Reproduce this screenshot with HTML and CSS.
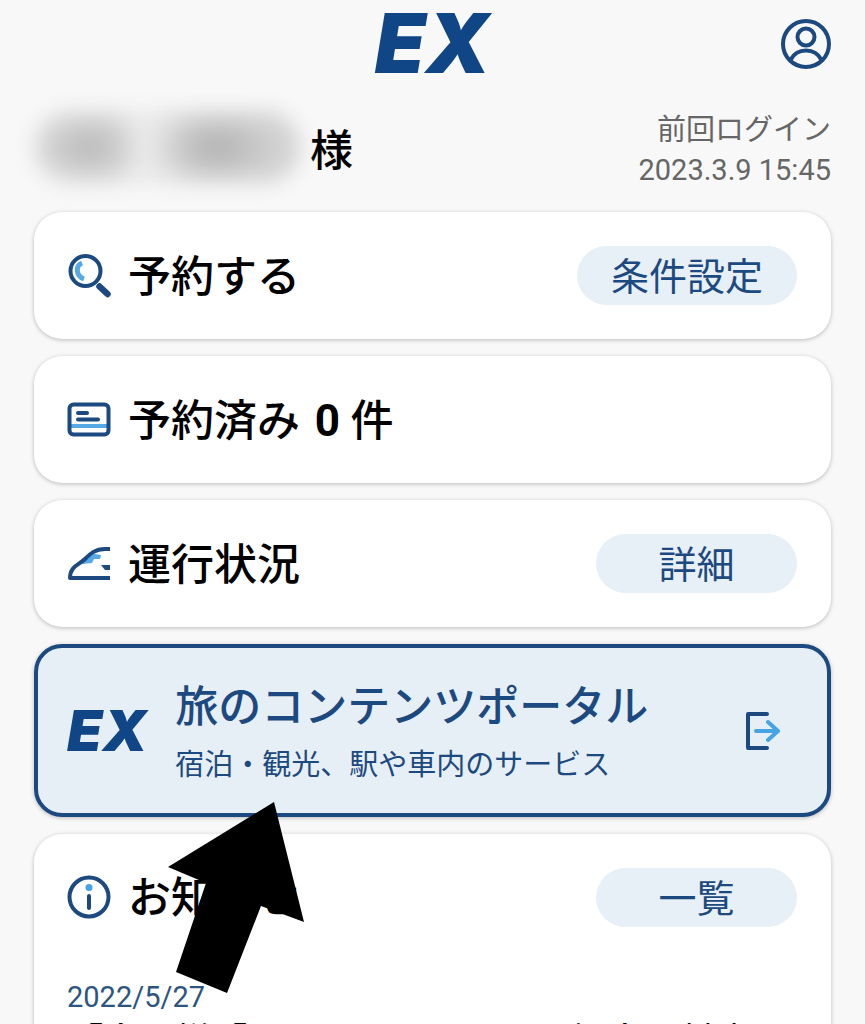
FILE: index.html
```
<!DOCTYPE html>
<html lang="ja">
<head>
  <meta charset="UTF-8">
  <meta name="viewport" content="width=device-width, initial-scale=1.0">
  <title>EX</title>
  <link rel="stylesheet" href="styles.css">
</head>
<body>
  <header class="topbar">
    <h1 class="logo">EX</h1>
    <button class="account" type="button" aria-label="アカウント">
      <svg width="52" height="52" viewBox="0 0 52 52" fill="none" stroke="#1c4a80" stroke-width="4">
        <circle cx="26" cy="26" r="23"/>
        <circle cx="26" cy="19" r="8.5"/>
        <path d="M10.500 42c3-6 9-9.500 15.500-9.500s12.500 3.500 15.500 9.500"/>
      </svg>
    </button>
  </header>

  <main>
    <section class="user">
      <p class="user-name"><span class="masked"></span>様</p>
      <p class="last-login">前回ログイン<br>2023.3.9 15:45</p>
    </section>

    <section class="card">
      <svg class="icon" width="44" height="44" viewBox="0 0 44 44" fill="none" stroke-width="4">
        <path d="M15 9c-7 3-6 13 2 16" stroke="#55aae6" stroke-width="5"/>
        <circle cx="18.500" cy="17" r="15" stroke="#1c4a80"/>
        <path d="M32.500 32.500l8 7.500" stroke="#1c4a80" stroke-width="6.500" stroke-linecap="round"/>
      </svg>
      <h2>予約する</h2>
      <button class="pill" type="button">条件設定</button>
    </section>

    <section class="card">
      <svg class="icon" width="44" height="44" viewBox="0 0 44 44" fill="none" stroke="#1c4a80" stroke-width="4">
        <path d="M3 28h38" stroke="#55aae6"/>
        <rect x="2.500" y="6.500" width="39" height="30" rx="4"/>
        <path d="M11 15h9M11 21.500h20" stroke-linecap="round"/>
      </svg>
      <h2>予約済み <b>0</b> 件</h2>
    </section>

    <section class="card">
      <svg class="icon" width="44" height="44" viewBox="0 0 44 44" fill="none" stroke="#1c4a80" stroke-width="4">
        <path d="M22 11l12 2-1 4-6 0-2 4-10 1z" fill="#55aae6" stroke="none"/>
        <path d="M43 7H38c-10 0-15 5-20 10C12 23 3 24 3 36H43" stroke-linejoin="round"/>
        <path d="M43 23h-9l4 5h5z" fill="#1c4a80" stroke="none"/>
      </svg>
      <h2>運行状況</h2>
      <button class="pill" type="button">詳細</button>
    </section>

    <a class="card portal" href="#">
      <span class="logo logo-small">EX</span>
      <span class="portal-text">
        <strong>旅のコンテンツポータル</strong>
        <small>宿泊・観光、駅や車内のサービス</small>
      </span>
      <svg class="exit" width="36" height="40" viewBox="0 0 36 40" fill="none" stroke-width="4" stroke-linecap="round" stroke-linejoin="round">
        <path d="M22 3H3v34h19" stroke="#1c4a80"/>
        <path d="M11 20h22M23 11l10 9-10 9" stroke="#45a3e6"/>
      </svg>
    </a>

    <section class="card news">
      <div class="news-head">
        <svg class="icon" width="44" height="44" viewBox="0 0 44 44" fill="none" stroke="#1c4a80" stroke-width="4">
          <circle cx="22" cy="22" r="19.500"/>
          <circle cx="22" cy="12.500" r="3.500" fill="#45a3e6" stroke="none"/>
          <path d="M22 21v12" stroke-linecap="round"/>
        </svg>
        <h2>お知らせ</h2>
        <button class="pill" type="button">一覧</button>
      </div>
      <time datetime="2022-05-27">2022/5/27</time>
      <p class="news-title">「会の様「さくら」とこまちの場合の対応</p>
      <svg class="pointer" width="138" height="192" viewBox="0 0 138 192">
        <path d="M107 0L1 65l38 16-30 89 51 21 34-87 43 16z"/>
      </svg>
    </section>
  </main>
</body>
</html>
```

FILE: styles.css
```
* {
  box-sizing: border-box;
}

body {
  margin: 0;
  height: 100vh;
  overflow: hidden;
  background: #f8f8f8;
  color: #000;
  font-family: Roboto, "Noto Sans CJK JP", sans-serif;
}

h1, h2, p {
  margin: 0;
}

button {
  border: none;
  padding: 0;
  font-family: inherit;
  cursor: pointer;
}

.topbar {
  display: grid;
  grid-template-columns: 1fr auto 1fr;
  align-items: center;
  height: 88px;
  padding: 0 33px;
}

.logo {
  grid-column: 2;
  color: #104586;
  font-family: Inter, "Open Sans", sans-serif;
  font-size: 82px;
  font-style: italic;
  font-weight: 900;
  line-height: 88px;
}

.account {
  justify-self: end;
  height: 52px;
  background: none;
}

main {
  display: flex;
  flex-direction: column;
  gap: 17px;
  padding: 0 34px;
}

.user {
  display: flex;
  justify-content: space-between;
  align-items: center;
  height: 107px;
  padding-top: 16px;
}

.user-name {
  display: flex;
  align-items: center;
  gap: 10px;
  padding-bottom: 6px;
  font-size: 43px;
  font-weight: 500;
}

/* hidden name */
.masked {
  width: 266px;
  height: 72px;
  border-radius: 36px;
  background:
    radial-gradient(closest-side, #b8b8b8, transparent) 0 0 / 110px 72px no-repeat,
    radial-gradient(closest-side, #b0b0b0, transparent) 118px 0 / 130px 72px no-repeat,
    linear-gradient(to right, #dcdcdc 30%, #ececec 40%, #d8d8d8 60%, #d2d2d2);
  filter: blur(10px);
}

.last-login {
  color: #666;
  font-size: 29px;
  line-height: 40px;
  text-align: right;
}

.card {
  display: flex;
  align-items: center;
  min-height: 127px;
  padding: 0 34px 0 33px;
  border-radius: 28px;
  background: #fff;
  box-shadow: 0 1px 4px rgba(0, 0, 0, 0.25);
}

.icon {
  flex: none;
  margin-right: 17px;
}

h2 {
  padding-top: 2px;
  font-size: 43px;
  font-weight: 500;
  line-height: 60px;
}

h2 b {
  margin-left: 4px;
  font-size: 44px;
}

.pill {
  min-width: 201px;
  height: 59px;
  margin-left: auto;
  padding: 4px 34px 0;
  border-radius: 30px;
  background: #e7eff7;
  color: #1c4a80;
  font-size: 38px;
  line-height: 55px;
}

.portal {
  min-height: 173px;
  padding: 0 46px 0 29px;
  border: 4px solid #1c4a80;
  background: #e7eff6;
  color: #1c4a80;
  text-decoration: none;
}

.logo-small {
  font-size: 57px;
  line-height: 60px;
}

.portal-text {
  display: flex;
  flex-direction: column;
  margin-left: 28px;
  padding-top: 8px;
}

.portal-text strong {
  font-size: 43px;
  font-weight: 500;
  line-height: 60px;
}

.portal-text small {
  font-size: 29px;
  line-height: 56px;
}

.exit {
  margin-left: auto;
}

.news {
  position: relative;
  display: block;
}

.news-head {
  display: flex;
  align-items: center;
  height: 126px;
}

time {
  display: block;
  margin-top: 17px;
  color: #2c5580;
  font-size: 29px;
  line-height: 40px;
}

.news-title {
  font-size: 36px;
  line-height: 50px;
  white-space: nowrap;
}

.pointer {
  position: absolute;
  top: -32px;
  left: 133px;
}
```
